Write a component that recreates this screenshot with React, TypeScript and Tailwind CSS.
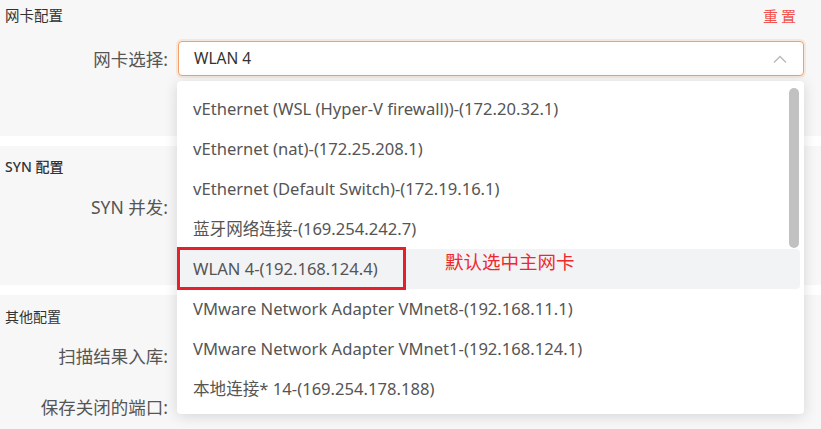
import React from "react";

const items = [
  "vEthernet (WSL (Hyper-V firewall))-(172.20.32.1)",
  "vEthernet (nat)-(172.25.208.1)",
  "vEthernet (Default Switch)-(172.19.16.1)",
  "蓝牙网络连接-(169.254.242.7)",
  "WLAN 4-(192.168.124.4)",
  "VMware Network Adapter VMnet8-(192.168.11.1)",
  "VMware Network Adapter VMnet1-(192.168.124.1)",
  "本地连接* 14-(169.254.178.188)",
];

const font = { fontFamily: '"Noto Sans", "Noto Sans CJK SC", sans-serif' };

function Label({ children }: { children: React.ReactNode }) {
  return (
    <div className="w-[170px] shrink-0 text-right pr-[2px] text-[17.5px] text-[#555] leading-[24px]">{children}</div>
  );
}

export default function App() {
  return (
    <div className="relative w-[821px] h-[429px] overflow-hidden bg-white" style={font}>
      <div className="flex flex-col gap-[10px] h-full">
        <div className="h-[136px] bg-[#f7f7f7] flex flex-col">
          <div className="flex items-center justify-between h-[32px] pl-[5px] pr-[22px]">
            <span className="text-[14.5px] text-[#333]">网卡配置</span>
            <span className="text-[15px] text-[#f0544f] tracking-[3px]">重置</span>
          </div>
          <div className="flex items-center mt-[9px]">
            <Label>网卡选择:</Label>
            <div className="ml-[8px] w-[626px] h-[35px] rounded-[4px] border border-[#f2a06a] bg-white shadow-[0_0_0_2px_rgba(245,160,100,0.18)] flex items-center justify-between pl-[15px] pr-[16px]">
              <span className="text-[15.5px] text-[#333]">WLAN 4</span>
              <svg width="14" height="8" viewBox="0 0 14 8" fill="none">
                <path d="M1 7.5 L7 1.5 L13 7.5" stroke="#b8b8b8" strokeWidth="1.3" />
              </svg>
            </div>
          </div>
        </div>
        <div className="h-[139px] bg-[#f7f7f7] flex flex-col">
          <div className="flex items-center h-[40px] pl-[5px]">
            <span className="text-[14px] text-[#333] font-medium">SYN 配置</span>
          </div>
          <div className="flex items-center mt-[9px]">
            <Label>SYN 并发:</Label>
          </div>
        </div>
        <div className="flex-1 bg-[#f7f7f7] flex flex-col">
          <div className="flex items-center h-[42px] pl-[5px]">
            <span className="text-[14px] text-[#333]">其他配置</span>
          </div>
          <div className="flex flex-col gap-[27px] mt-[7px]">
            <Label>扫描结果入库:</Label>
            <Label>保存关闭的端口:</Label>
          </div>
        </div>
      </div>

      <div className="absolute left-[177px] top-[81px] w-[627px] h-[333px] bg-white rounded-[4px] shadow-[0_2px_14px_rgba(0,0,0,0.14)] pt-[8px] pl-[4px] pr-[4px] overflow-hidden">
        <div className="flex flex-col">
          {items.map((t, i) => (
            <div
              key={i}
              className={
                "h-[40px] flex items-center pl-[12px] text-[16.6px] text-[#555] rounded-[4px] whitespace-nowrap " +
                (i === 4 ? "bg-[#f2f3f5]" : "")
              }
            >
              {t}
            </div>
          ))}
        </div>
        <div className="absolute left-[612px] top-[7px] w-[10px] h-[160px] rounded-full bg-[#c1c1c1]" />
      </div>

      <div className="absolute left-[177px] top-[247px] w-[229px] h-[43px] border-[3px] border-[#e5202b]" />
      <div className="absolute left-[445px] top-[248px] text-[18.5px] text-[#f0282d]">默认选中主网卡</div>
    </div>
  );
}
